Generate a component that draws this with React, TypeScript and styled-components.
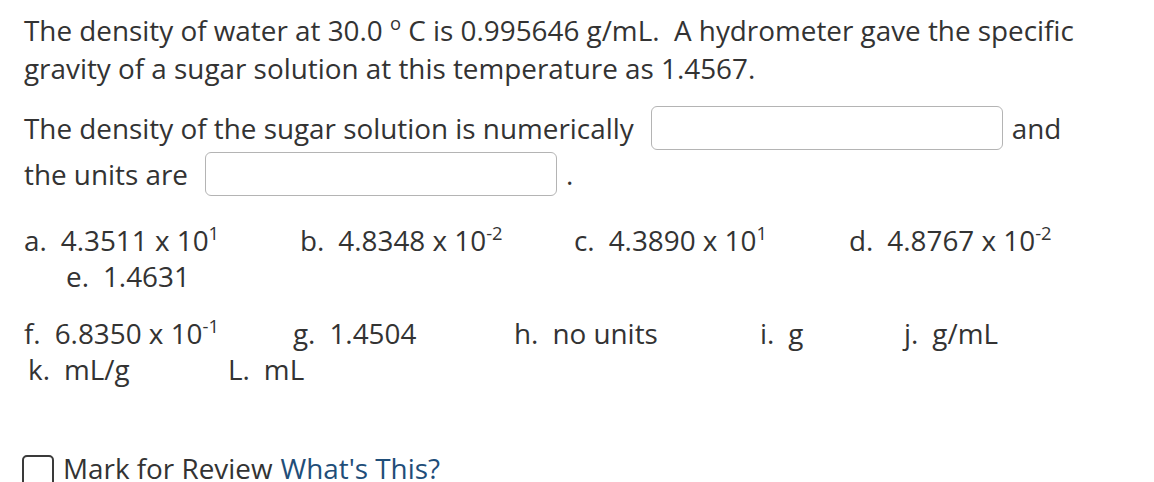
import { type FunctionComponent, type ReactNode } from 'react'
import styled, { createGlobalStyle } from 'styled-components'

const GlobalStyle = createGlobalStyle`
  html, body {
    margin: 0;
    padding: 0;
    background: #ffffff;
  }
  body {
    font-family: 'Open Sans', 'Noto Sans', sans-serif;
    color: #333333;
  }
`

const Page = styled.main`
  padding: 11px 24px 0 24px;
  font-size: 27.85px;
  height: 482px;
  overflow: hidden;
  box-sizing: border-box;
`

const Question = styled.p`
  margin: 0 0 18px 0;
  line-height: 38px;
`

const AnswerLine = styled.div`
  display: flex;
  align-items: center;
  height: 46px;
  white-space: nowrap;
`

const Blank = styled.input`
  box-sizing: border-box;
  width: 352px;
  height: 44px;
  margin: 0 9px 0 17px;
  border: 1.5px solid #b4b4b4;
  border-radius: 6px;
  background: #ffffff;
  font: inherit;
  padding: 0 8px;
`

const Choices = styled.div`
  margin-top: 25px;
`

const ChoiceLine = styled.div<{ $gapAfter?: number, $indent?: number }>`
  display: flex;
  height: 36px;
  line-height: 36px;
  padding-left: ${p => p.$indent ?? 0}px;
  margin-bottom: ${p => p.$gapAfter ?? 0}px;
  white-space: nowrap;
`

const Choice = styled.div<{ $width?: number }>`
  flex: 0 0 ${p => (p.$width != null ? `${p.$width}px` : 'auto')};
  display: flex;
  gap: 14px;
`

const Sup = styled.sup`
  font-size: 0.66em;
  line-height: 0;
  vertical-align: 0.6em;
`

const ReviewRow = styled.div`
  display: flex;
  align-items: flex-start;
  margin-top: 62px;
  line-height: 38px;
`

const ReviewBox = styled.span`
  box-sizing: border-box;
  width: 32px;
  height: 32px;
  margin: 6px 9px 0 -2px;
  border: 2px solid #3a3a3a;
  border-radius: 5px;
  flex: 0 0 auto;
`

const Link = styled.a`
  color: #1f4e79;
  text-decoration: none;
  margin-left: 8px;
`

interface ChoiceItemProps { label: string, width?: number, children: ReactNode }

const ChoiceItem: FunctionComponent<ChoiceItemProps> = ({ label, width, children }) => (
  <Choice $width={width}>
    <span>{label}</span>
    <span>{children}</span>
  </Choice>
)

export default function App (): ReactNode {
  return (
    <>
      <GlobalStyle />
      <Page>
        <Question>
          The density of water at 30.0 <Sup>o</Sup> C is 0.995646 g/mL.&nbsp; A hydrometer gave the specific
          <br />
          gravity of a sugar solution at this temperature as 1.4567.
        </Question>
        <AnswerLine>
          <span>The density of the sugar solution is numerically</span>
          <Blank type='text' aria-label='density value' />
          <span>and</span>
        </AnswerLine>
        <AnswerLine>
          <span>the units are</span>
          <Blank type='text' aria-label='density units' />
          <span>.</span>
        </AnswerLine>
        <Choices>
          <ChoiceLine>
            <ChoiceItem label='a.' width={276}>4.3511 x 10<Sup>1</Sup></ChoiceItem>
            <ChoiceItem label='b.' width={274}>4.8348 x 10<Sup>-2</Sup></ChoiceItem>
            <ChoiceItem label='c.' width={275}>4.3890 x 10<Sup>1</Sup></ChoiceItem>
            <ChoiceItem label='d.'>4.8767 x 10<Sup>-2</Sup></ChoiceItem>
          </ChoiceLine>
          <ChoiceLine $indent={42} $gapAfter={21}>
            <ChoiceItem label='e.'>1.4631</ChoiceItem>
          </ChoiceLine>
          <ChoiceLine>
            <ChoiceItem label='f.' width={269}>6.8350 x 10<Sup>-1</Sup></ChoiceItem>
            <ChoiceItem label='g.' width={221}>1.4504</ChoiceItem>
            <ChoiceItem label='h.' width={246}>no units</ChoiceItem>
            <ChoiceItem label='i.' width={144}>g</ChoiceItem>
            <ChoiceItem label='j.'>g/mL</ChoiceItem>
          </ChoiceLine>
          <ChoiceLine $indent={4}>
            <ChoiceItem label='k.' width={200}>mL/g</ChoiceItem>
            <ChoiceItem label='L.'>mL</ChoiceItem>
          </ChoiceLine>
        </Choices>
        <ReviewRow>
          <ReviewBox />
          <span>Mark for Review</span>
          <Link href='#'>What's This?</Link>
        </ReviewRow>
      </Page>
    </>
  )
}
